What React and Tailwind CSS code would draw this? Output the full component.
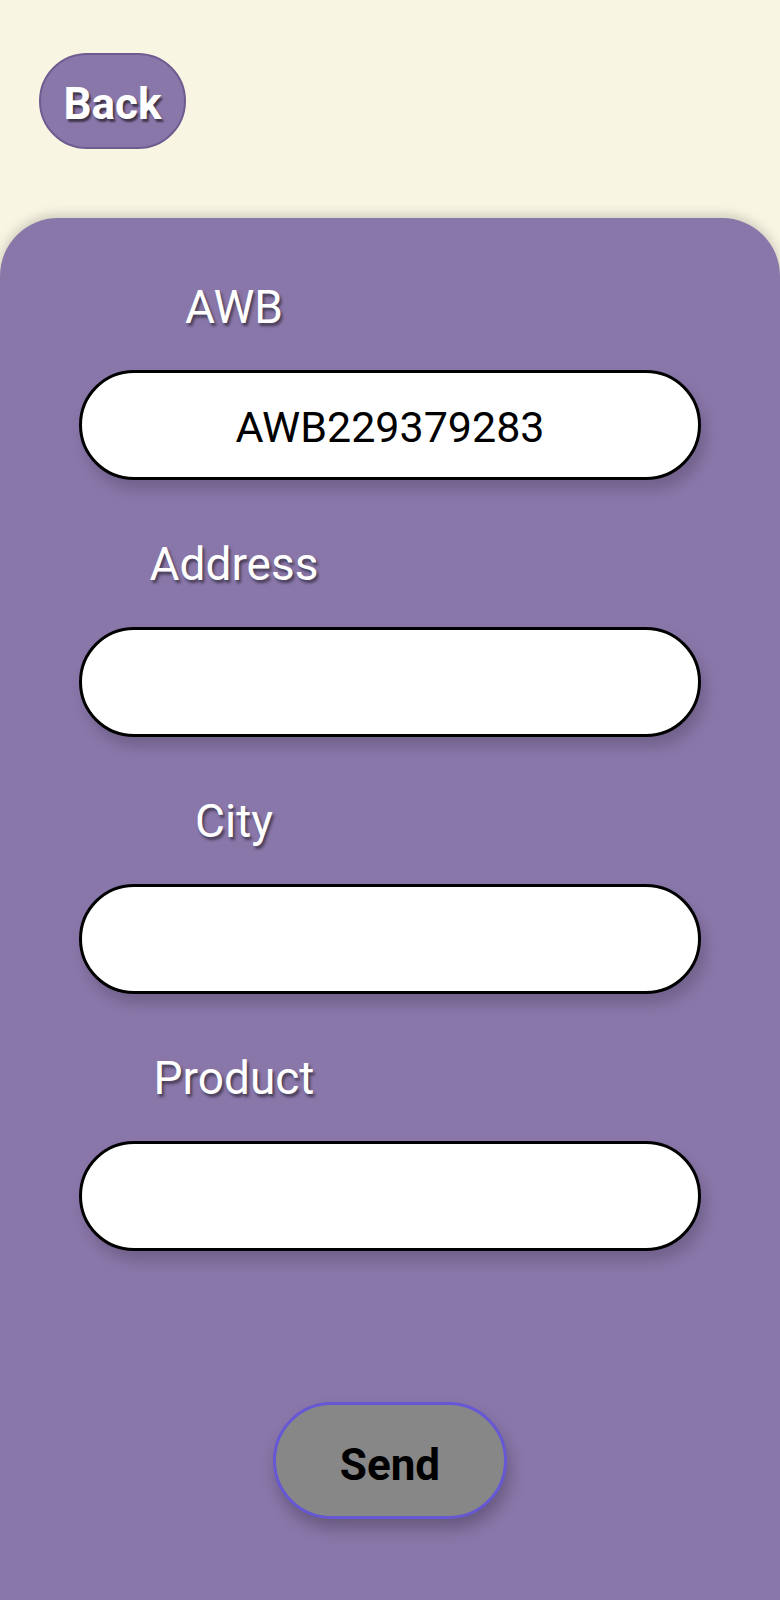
import React, { useState } from 'react';

const fields = [
    { label: 'AWB', name: 'awb', initial: 'AWB229379283' },
    { label: 'Address', name: 'address', initial: '' },
    { label: 'City', name: 'city', initial: '' },
    { label: 'Product', name: 'product', initial: '' },
];

const App = () => {
    const [values, setValues] = useState(
        Object.fromEntries(fields.map(f => [f.name, f.initial]))
    );

    return (
        <div className="min-h-[1600px] flex flex-col bg-[#f8f5e3] font-['Roboto',sans-serif]">
            {/* top bar with back button */}
            <div className="h-[218px] pt-[53px] pl-[39px]">
                <button className="w-[147px] h-[96px] pt-[5px] rounded-full bg-[#8a77aa] border-2 border-[#6e5b90] text-white font-bold text-[44px] leading-none [text-shadow:2px_3px_2px_rgba(0,0,0,0.55)]">
                    Back
                </button>
            </div>

            {/* form card */}
            <div className="flex-1 bg-[#8a77aa] rounded-t-[58px] shadow-[0_-3px_12px_rgba(0,0,0,0.18)] pt-[62px] flex flex-col">
                <div className="flex flex-col gap-[57px]">
                    {fields.map(field => (
                        <div key={field.name} className="flex flex-col">
                            <label className="w-[308px] ml-[80px] text-center text-white text-[46px] leading-[54px] [text-shadow:2px_3px_3px_rgba(0,0,0,0.5)]">
                                {field.label}
                            </label>
                            <input
                                type="text"
                                value={values[field.name]}
                                onChange={(e) => setValues({ ...values, [field.name]: e.target.value })}
                                className="mt-[36px] mx-auto w-[622px] h-[110px] pt-[4px] rounded-full bg-white border-[3.5px] border-black text-center text-black text-[43px] outline-none shadow-[5px_10px_14px_rgba(0,0,0,0.18)]"
                            />
                        </div>
                    ))}
                </div>

                <div className="flex justify-center mt-[151px]">
                    <button className="w-[234px] h-[117px] pt-[9px] rounded-full bg-[#878787] border-[3.5px] border-[#6658d4] text-black font-bold text-[44px] leading-none shadow-[3px_10px_16px_rgba(0,0,0,0.25)]">
                        Send
                    </button>
                </div>
            </div>
        </div>
    );
};

export default App;
